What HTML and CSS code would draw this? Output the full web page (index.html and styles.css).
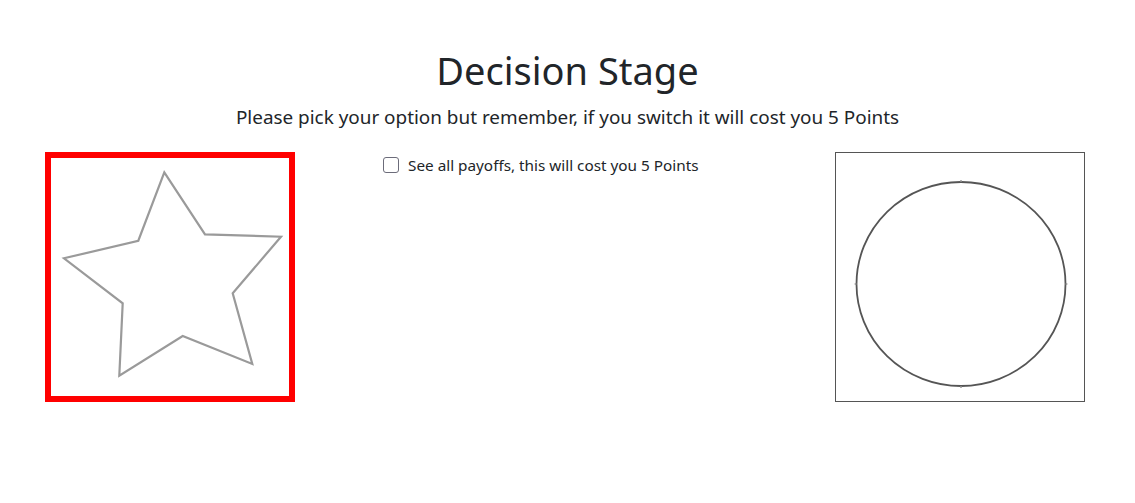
FILE: index.html
```html
<!DOCTYPE html>
<html lang="en">
<head>
<meta charset="utf-8">
<title>Decision Stage</title>
<link rel="stylesheet" href="styles.css">
</head>
<body>
<div class="page">
  <header class="intro">
    <h1 class="title">Decision Stage</h1>
    <p class="lead">Please pick your option but remember, if you switch it will cost you 5 Points</p>
  </header>
  <div class="choices">
    <div class="option option-selected">
      <svg class="shape" width="238" height="238" viewBox="0 0 238 238">
        <polygon points="113.3,14.3 154,76.3 230,78.7 181.7,135.3 201.3,206 131.7,178 68.3,217.7 71.7,145.3 13,100.3 87.3,82.7" fill="none" stroke="#9a9a9a" stroke-width="2.2" stroke-linejoin="miter"/>
      </svg>
    </div>
    <div class="middle">
      <label class="check">
        <span class="box"></span>
        <span class="check-text">See all payoffs, this will cost you 5 Points</span>
      </label>
    </div>
    <div class="option option-plain">
      <svg class="shape" width="248" height="248" viewBox="0 0 248 248">
        <ellipse cx="125" cy="131" rx="104.5" ry="102" fill="none" stroke="#555" stroke-width="1.8"/>
        <circle cx="125" cy="28" r="1" fill="#999"/>
        <circle cx="125" cy="234" r="1" fill="#999"/>
        <circle cx="19.5" cy="131" r="1" fill="#999"/>
        <circle cx="230.5" cy="131" r="1" fill="#999"/>
      </svg>
    </div>
  </div>
</div>
</body>
</html>
```

FILE: styles.css
```css
* { box-sizing: border-box; }
html, body { margin: 0; padding: 0; background: #fff; }
body {
  font-family: "Segoe UI", "Noto Sans", "Open Sans", sans-serif;
  color: #212529;
}
.page { padding-top: 46px; }
.intro { text-align: center; }
.title {
  margin: 0;
  font-size: 38px;
  font-weight: 400;
  line-height: 48px;
}
.lead {
  margin: 9px 0 0;
  font-size: 18.9px;
  line-height: 28px;
}
.choices {
  display: flex;
  align-items: flex-start;
  margin-top: 21px;
  padding-left: 45px;
}
.option {
  width: 250px;
  height: 250px;
  flex: none;
  display: flex;
}
.option-selected { border: 6px solid #ff0000; }
.option-plain { border: 1px solid #555; }
.shape { display: block; }
.middle {
  width: 540px;
  flex: none;
  padding-left: 88px;
  padding-top: 4px;
}
.check {
  display: flex;
  align-items: center;
  gap: 9px;
  font-size: 15.3px;
  line-height: 18px;
}
.box {
  width: 16px;
  height: 16px;
  border: 1.5px solid #6c6c7a;
  border-radius: 3px;
  background: #fff;
  flex: none;
}
```
